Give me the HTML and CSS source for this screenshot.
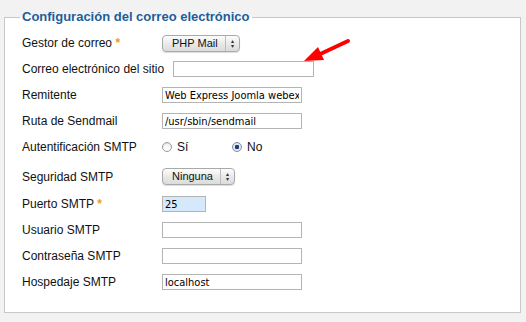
FILE: index.html
```html
<!DOCTYPE html>
<html lang="es">
<head>
    <meta charset="UTF-8">
    <title>Configuración del correo</title>
    <link rel="stylesheet" href="styles.css">
</head>
<body>
    <fieldset class="mail-config">
        <legend>Configuración del correo electrónico</legend>

        <div class="row">
            <label>Gestor de correo <span class="star">*</span></label>
            <div class="fake-select">
                <span class="sel-text">PHP Mail</span>
                <span class="sel-arrows">&#9652;<br>&#9662;</span>
            </div>
        </div>
        <div class="row">
            <label>Correo electrónico del sitio</label>
            <input class="field wide" type="text" value="">
        </div>
        <div class="row">
            <label>Remitente</label>
            <input class="field" type="text" value="Web Express Joomla webexpress">
        </div>
        <div class="row">
            <label>Ruta de Sendmail</label>
            <input class="field" type="text" value="/usr/sbin/sendmail">
        </div>
        <div class="row">
            <label>Autentificación SMTP</label>
            <div class="radios">
                <span class="radio"><span class="dot"></span>Sí</span>
                <span class="radio checked"><span class="dot"></span>No</span>
            </div>
        </div>
        <div class="row tall">
            <label>Seguridad SMTP</label>
            <div class="fake-select">
                <span class="sel-text">Ninguna</span>
                <span class="sel-arrows">&#9652;<br>&#9662;</span>
            </div>
        </div>
        <div class="row">
            <label>Puerto SMTP <span class="star">*</span></label>
            <input class="field port" type="text" value="25">
        </div>
        <div class="row">
            <label>Usuario SMTP</label>
            <input class="field" type="text" value="">
        </div>
        <div class="row">
            <label>Contraseña SMTP</label>
            <input class="field" type="text" value="">
        </div>
        <div class="row">
            <label>Hospedaje SMTP</label>
            <input class="field" type="text" value="localhost">
        </div>
    </fieldset>

    <!-- arrow pointing at the empty site email -->
    <svg class="pointer" width="60" height="40" viewBox="0 0 60 40">
        <line x1="52" y1="5" x2="20" y2="20" stroke="#f00" stroke-width="4" stroke-linecap="round"/>
        <polygon points="8,25 22,11 28,24" fill="#f00"/>
    </svg>
</body>
</html>
```

FILE: styles.css
```css
*{
    box-sizing: border-box;
}
body{
    margin: 0;
    background-color: #f2f2f2;
    font-family: "Liberation Sans", Arial, sans-serif;
    font-size: 12px;
    color: #111;
    position: relative;
    height: 322px;
}
.mail-config{
    margin: 8px 6px 0 4px;
    width: 517px;
    height: 305px;
    padding: 4px 15px 0 15px;
    border: 1px solid #c8c8c8;
    background-color: white;
}
.mail-config legend{
    padding: 0 2px;
    font-size: 13px;
    font-weight: bold;
    color: #1d5d9c;
    line-height: 18px;
}
.row{
    display: flex;
    align-items: center;
    height: 26px;
    padding-left: 2px;
}
.row.tall{
    height: 29px;
    margin-top: 2px;
}
.row label{
    min-width: 131px;
    margin-right: 9px;
    white-space: nowrap;
}
.star{
    color: #ef9a1c;
    font-weight: bold;
}
.field{
    width: 140px;
    height: 16px;
    border: 1px solid #b4b4b4;
    padding: 0 2px;
    margin: 0;
    font-family: "DejaVu Sans Condensed", "DejaVu Sans", sans-serif;
    font-size: 11px;
    color: #000;
    background: white;
    outline: none;
}
.field.wide{
    width: 141px;
}
.field.port{
    width: 44px;
    background-color: #d6e9fc;
}
.fake-select{
    display: flex;
    align-items: stretch;
    height: 17px;
    border: 1px solid #a9a9a9;
    border-radius: 4px;
    background: linear-gradient(#fdfdfd, #e6e6e6 60%, #dcdcdc);
    box-shadow: 0 1px 1px #ddd;
    font-size: 11px;
    color: #111;
}
.sel-text{
    padding: 0 7px 0 9px;
    line-height: 15px;
}
.sel-arrows{
    width: 14px;
    border-left: 1px solid #bdbdbd;
    font-size: 6px;
    line-height: 5px;
    text-align: center;
    padding-top: 3px;
    color: #333;
}
.radios{
    display: flex;
    width: 140px;
}
.radio{
    display: flex;
    align-items: center;
    width: 86px;
}
.radio .dot{
    width: 10px;
    height: 10px;
    border: 1px solid #9a9a9a;
    border-radius: 50%;
    margin-right: 5px;
    background: linear-gradient(#f4f4f4, #ffffff);
    box-shadow: inset 0 1px 1px #ddd;
}
.radio.checked .dot{
    background: radial-gradient(circle, #233c6a 0 2px, #dfe9f6 2.5px);
    border-color: #7d8fa8;
}
.pointer{
    position: absolute;
    left: 296px;
    top: 36px;
}
```
